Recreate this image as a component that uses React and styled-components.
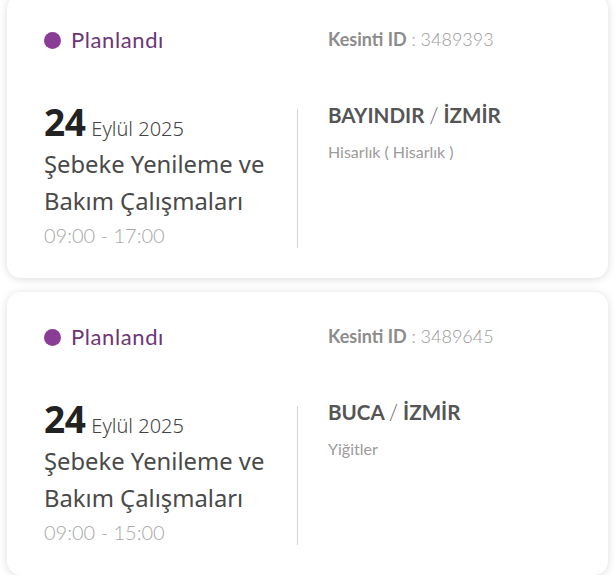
import React from "react";
import styled, { createGlobalStyle } from "styled-components";

const Global = createGlobalStyle`
  html, body { margin: 0; padding: 0; background: #ffffff; }
  body { font-family: "Noto Sans", sans-serif; }
  * { box-sizing: border-box; }
`;

const List = styled.div`
  display: flex;
  flex-direction: column;
  gap: 14px;
  padding: 0 8px 0 7px;
  margin-top: -5px;
`;

const Card = styled.div`
  background: #fff;
  border-radius: 14px;
  box-shadow: 0 1px 8px rgba(0, 0, 0, 0.14);
  padding: 32px 30px 30px 37px;
  display: grid;
  grid-template-columns: 254px 1fr;
  row-gap: 55px;
  height: 283px;
`;

const Status = styled.div`
  display: flex;
  align-items: center;
  gap: 10px;
  font-family: "Lato", sans-serif;
  font-size: 22px;
  letter-spacing: 0.6px;
  color: #6d3577;
  line-height: 26px;
`;

const Dot = styled.span`
  width: 17px;
  height: 17px;
  border-radius: 50%;
  background: #8a3d95;
`;

const OutageId = styled.div`
  padding-left: 30px;
  font-family: "Lato", sans-serif;
  font-size: 18px;
  line-height: 24px;
  color: #9a9a9a;
  b { font-weight: 700; color: #8c8c8c; }
  span { font-weight: 300; }
`;

const Left = styled.div`
  border-right: 1px solid #d6d6d6;
  display: flex;
  flex-direction: column;
  height: 139px;
`;

const DateLine = styled.div`
  display: flex;
  align-items: baseline;
  gap: 6px;
  color: #222;
  line-height: 26px;
`;

const Day = styled.span`
  font-family: "Noto Sans", sans-serif;
  font-size: 37px;
  font-weight: 700;
  letter-spacing: -0.5px;
`;

const MonthYear = styled.span`
  font-size: 20px;
  color: #444;
  font-weight: 300;
`;

const Title = styled.div`
  font-size: 23.8px;
  color: #4a4a4a;
  line-height: 37px;
  margin-top: 4px;
`;

const Time = styled.div`
  font-family: "Lato", sans-serif;
  font-size: 20px;
  color: #a8a8a8;
  font-weight: 300;
  line-height: 26px;
  margin-top: 2px;
`;

const Right = styled.div`
  padding-left: 30px;
`;

const Place = styled.div`
  font-family: "Lato", sans-serif;
  font-size: 20.6px;
  font-weight: 700;
  color: #555;
  line-height: 24px;
  margin-top: -6px;
  span { font-weight: 300; }
`;

const Hood = styled.div`
  font-family: "Lato", sans-serif;
  font-size: 16px;
  color: #9b9b9b;
  margin-top: 15px;
`;

const data = [
  { id: "3489393", time: "09:00 - 17:00", district: "BAYINDIR", city: "İZMİR", hood: "Hisarlık ( Hisarlık )" },
  { id: "3489645", time: "09:00 - 15:00", district: "BUCA", city: "İZMİR", hood: "Yiğitler" },
];

export default function App() {
  return (
    <>
      <Global />
      <List>
        {data.map((d) => (
          <Card key={d.id}>
            <Status>
              <Dot />
              Planlandı
            </Status>
            <OutageId>
              <b>Kesinti ID</b> <span>: {d.id}</span>
            </OutageId>
            <Left>
              <DateLine>
                <Day>24</Day>
                <MonthYear>Eylül 2025</MonthYear>
              </DateLine>
              <Title>
                Şebeke Yenileme ve
                <br />
                Bakım Çalışmaları
              </Title>
              <Time>{d.time}</Time>
            </Left>
            <Right>
              <Place>
                {d.district} <span>/</span> {d.city}
              </Place>
              <Hood>{d.hood}</Hood>
            </Right>
          </Card>
        ))}
      </List>
    </>
  );
}
